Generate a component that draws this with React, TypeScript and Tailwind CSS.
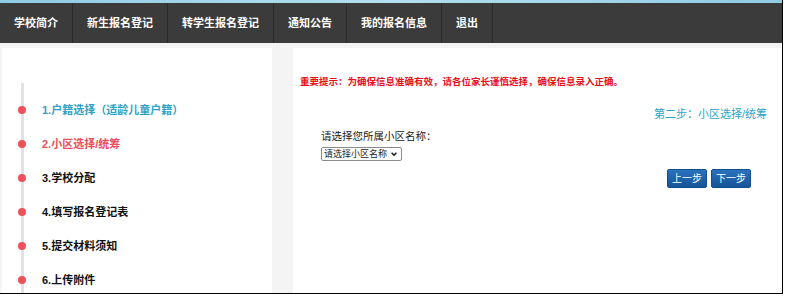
import React from 'react';

const navItems = ['学校简介', '新生报名登记', '转学生报名登记', '通知公告', '我的报名信息', '退出'];

type Step = { label: string; tone: 'done' | 'active' | 'todo' };

const steps: Step[] = [
  { label: '1.户籍选择（适龄儿童户籍）', tone: 'done' },
  { label: '2.小区选择/统筹', tone: 'active' },
  { label: '3.学校分配', tone: 'todo' },
  { label: '4.填写报名登记表', tone: 'todo' },
  { label: '5.提交材料须知', tone: 'todo' },
  { label: '6.上传附件', tone: 'todo' },
];

const toneClass = {
  done: 'text-[#2ea3c6]',
  active: 'text-[#ec4d5c]',
  todo: 'text-[#111]',
};

const StepRow = ({ step }: { step: Step }) => (
  <div className="flex items-center h-[34px]">
    <div className="w-[40px] flex justify-center">
      <span className="block w-[8px] h-[8px] rounded-full bg-[#ee5159] relative z-10" />
    </div>
    <span className={`text-[11px] font-bold leading-none ${toneClass[step.tone]}`}>{step.label}</span>
  </div>
);

export default function App() {
  return (
    <div className="w-[787px] h-[296px] bg-white overflow-hidden font-['Liberation_Sans','Noto_Sans_CJK_SC',sans-serif]">
      <div className="w-[783px] h-[294px] border-r border-b border-black flex flex-col bg-[#f4f4f4]">
        <div className="h-[3px] bg-gradient-to-r from-[#8fcbe3] via-[#b4e0f0] to-[#8fcbe3]" />
        <nav className="h-[40px] bg-[#3b3b3b] flex">
          {navItems.map(item => (
            <div
              key={item}
              className="px-[14px] flex items-center border-r border-[#2a2a2a] text-white text-[11px] font-bold"
            >
              {item}
            </div>
          ))}
        </nav>

        <div className="flex flex-1 pt-[5px] min-h-0">
          {/* steps */}
          <aside className="ml-[2px] w-[270px] bg-white relative pt-[45px]">
            <div className="absolute left-[19px] top-[35px] bottom-0 w-[3px] bg-[#e2e2e2]" />
            {steps.map(step => (
              <StepRow key={step.label} step={step} />
            ))}
          </aside>

          <div className="w-[21px]" />

          {/* main */}
          <main className="flex-1 bg-white pl-[7px] pr-[15px] pt-[29px]">
            <p className="text-[9.5px] font-bold text-[#e8101a] leading-none whitespace-nowrap">
              重要提示：为确保信息准确有效，请各位家长谨慎选择，确保信息录入正确。
            </p>
            <p className="mt-[22px] text-right text-[11px] text-[#2ea3c6] leading-none">第二步：小区选择/统筹</p>
            <div className="pl-[21px] mt-[11px]">
              <p className="text-[10.5px] text-[#222] leading-none">请选择您所属小区名称：</p>
              <div className="mt-[6px] flex">
                <div className="flex items-center justify-between h-[14px] w-[81px] border border-[#8a8a8a] rounded-[2px] pl-[2px] pr-[3px] text-[9px] text-[#222] leading-none whitespace-nowrap">
                  <span>请选择小区名称</span>
                  <svg width="8" height="8" viewBox="0 0 10 10">
                    <path d="M2 3.5 L5 6.5 L8 3.5" fill="none" stroke="#111" strokeWidth="1.8" />
                  </svg>
                </div>
              </div>
            </div>
            <div className="flex justify-end gap-[4px] mt-[8px] pr-[16px]">
              {['上一步', '下一步'].map(b => (
                <button
                  key={b}
                  className="w-[40px] h-[19px] rounded-[2px] border border-[#124f8e] bg-gradient-to-b from-[#2a72bd] to-[#165497] text-white text-[10px] leading-none"
                >
                  {b}
                </button>
              ))}
            </div>
          </main>
        </div>
      </div>
    </div>
  );
}
